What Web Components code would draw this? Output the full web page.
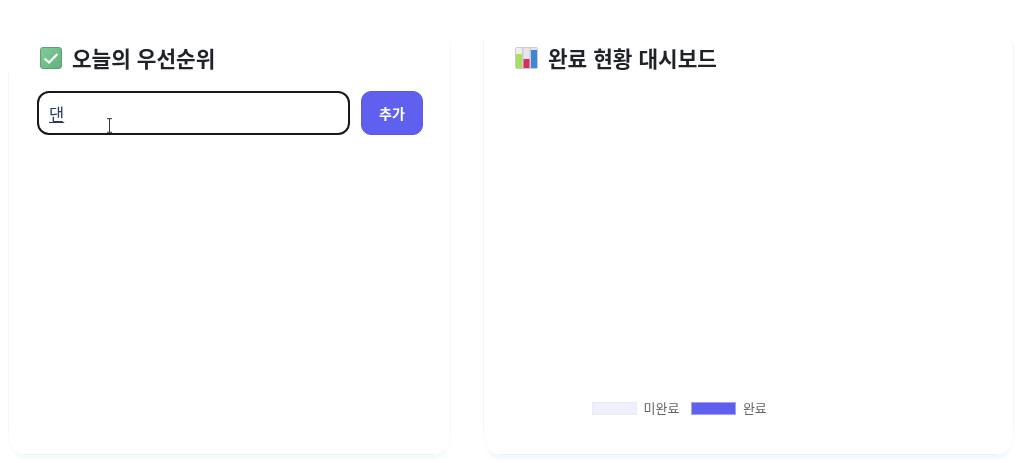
<!DOCTYPE html>
<html lang="ko">
<head>
<meta charset="utf-8">
<title>오늘의 우선순위</title>
<style>
html,body{margin:0;padding:0;height:100%;overflow:hidden;background:#fff;}
body{font-family:"Noto Sans CJK KR","Noto Sans",sans-serif;}
</style>
</head>
<body>
<app-board>
  <status-card tint="#f2fdf9" edge="#f1faf8" left-edge="#f4f4f4" left-start="65px">
    <card-title>
      <svg slot="icon" width="22" height="22" viewBox="0 0 22 22"><defs><linearGradient id="g" x1="0" y1="0" x2="1" y2="1"><stop offset="0" stop-color="#80cc98"/><stop offset="1" stop-color="#62b27e"/></linearGradient></defs><rect x="0.5" y="0.5" width="21" height="21" rx="2.500" fill="url(#g)" stroke="#5e9f78"/><path d="M4.500 11.500l4.500 4 8.500-8.500" fill="none" stroke="#fff" stroke-width="2.200"/></svg>
      오늘의 우선순위
    </card-title>
    <task-form value="댄"></task-form>
  </status-card>
  <status-card tint="#f1f8fe" edge="#f1f6fc" left-edge="#f1f6fc" left-start="31px">
    <card-title>
      <svg slot="icon" width="23" height="22" viewBox="0 0 23 22"><rect x="0" y="0" width="23" height="22" rx="2" fill="#c9ccd0"/><rect x="1" y="1" width="6" height="20" fill="#eef0e8"/><rect x="1" y="7" width="6" height="14" fill="#a8de62"/><rect x="8.500" y="1" width="6" height="20" fill="#ece4e6"/><rect x="8.500" y="12" width="6" height="9" fill="#d4305e"/><rect x="16" y="1" width="6" height="20" fill="#dfe8f2"/><rect x="16" y="3" width="6" height="18" fill="#3f86d8"/></svg>
      완료 현황 대시보드
    </card-title>
    <chart-legend>
      <legend-item color="#eef0fb" line="#e9ebf3">미완료</legend-item>
      <legend-item color="#6060ee" line="#a3a3f3">완료</legend-item>
    </chart-legend>
  </status-card>
</app-board>
<script>
function def(name, css, html, init){
  customElements.define(name, class extends HTMLElement{
    constructor(){super();const r=this.attachShadow({mode:"open"});r.innerHTML="<style>"+css+"</style>"+html;}
    connectedCallback(){if(init)init(this);}
  });
}
def("app-board",
  ":host{display:grid;grid-template-columns:443px 531px;column-gap:32px;padding:8px 0 0 8px;height:447px;box-sizing:content-box;filter:blur(.3px);}",
  "<slot></slot>");
def("status-card",
  `:host{display:flex;flex-direction:column;height:447px;box-sizing:border-box;border:1px solid transparent;border-radius:0 0 18px 18px;padding:30px 27px 0 28px;
    --e:#eee;--l:#eee;--s:65px;--t:#eee;
    background:
      linear-gradient(#fff,#fff) padding-box,
      linear-gradient(#f1f1f3,#f1f1f3) bottom/calc(100% - 32px) 1px no-repeat border-box,
      linear-gradient(#fbfbfb,#fbfbfb) bottom/100% 24px no-repeat border-box,
      linear-gradient(var(--l),var(--l)) left bottom/1px calc(100% - var(--s)) no-repeat border-box,
      linear-gradient(var(--e),var(--e)) right bottom/1px calc(100% - 35px) no-repeat border-box;
    box-shadow:0 7px 2px -3px var(--t);}`,
  "<slot></slot>",
  el=>{const s=el.style;
    s.setProperty("--t",el.getAttribute("tint"));
    s.setProperty("--e",el.getAttribute("edge"));
    s.setProperty("--l",el.getAttribute("left-edge"));
    s.setProperty("--s",el.getAttribute("left-start"));});
def("card-title",
  `:host{display:flex;align-items:center;height:38px;flex:none;font-size:21.33px;font-weight:700;color:#1f2328;line-height:38px;}
   .i{display:flex;margin:0 10px 0 3px;}`,
  '<span class="i"><slot name="icon"></slot></span><slot></slot>');
def("task-form",
  `:host{display:flex;gap:11px;height:44px;margin-top:14px;flex:none;position:relative;}
   .field{flex:none;width:313px;height:44px;box-sizing:border-box;border:2px solid #17181c;border-radius:12px;padding:2px 10px 0;font-size:16.500px;color:#2d3a66;display:flex;align-items:center;}
   .field u{text-underline-offset:1px;}
   button{width:62px;height:44px;box-sizing:border-box;background:#6060ee;border:1px solid #5a5ae0;border-radius:10px;color:#fff;font:700 14px "Noto Sans CJK KR",sans-serif;padding:0;}
   svg{position:absolute;left:69px;top:27px;}`,
  `<div class="field"><u id="v"></u></div><button type="button">추가</button>
   <svg width="7" height="15" viewBox="0 0 7 15"><path d="M1 .7h5M3.500.7v13.600M1 14.300h5" fill="none" stroke="#3a3a3a" stroke-width="1"/></svg>`,
  el=>{el.shadowRoot.getElementById("v").textContent=el.getAttribute("value");});
def("chart-legend",
  `:host{display:flex;gap:12px;align-items:center;margin-top:auto;margin-left:80px;margin-bottom:39px;height:13px;flex:none;}`,
  "<slot></slot>");
def("legend-item",
  `:host{display:flex;align-items:center;gap:7px;font-size:13px;color:#666;}
   span{display:block;line-height:13px;margin-top:-3px;}
   i{display:block;width:44.500px;height:13px;box-sizing:border-box;border:1px solid var(--b);background:var(--c);}`,
  "<i></i><span><slot></slot></span>",
  el=>{el.style.setProperty("--c",el.getAttribute("color"));el.style.setProperty("--b",el.getAttribute("line"));});
</script>
</body>
</html>
